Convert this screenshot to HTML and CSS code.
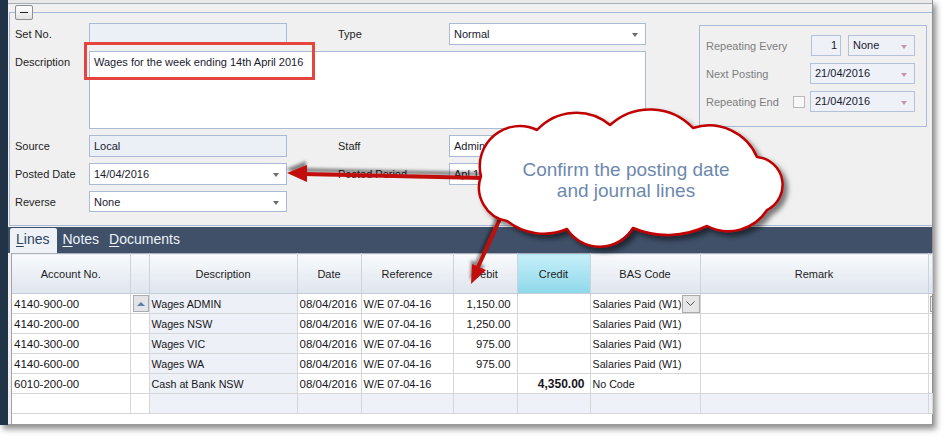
FILE: index.html
```html
<!DOCTYPE html>
<html>
<head>
<meta charset="utf-8">
<title>Journal</title>
<link rel="stylesheet" href="styles.css">
</head>
<body>
<div class="page">
  <div class="window">
    <div class="strip"></div>
    <div class="main">
      <div class="titlebar"></div>
      <div class="panel">
        <div class="group">
          <div class="collapse"><span class="dash"></span></div>
          <div class="form">
            <div class="lbl">Set No.</div>
            <div class="field ro"></div>
            <div></div>
            <div class="lbl">Type</div>
            <div class="field sel">Normal</div>

            <div class="lbl top">Description</div>
            <div class="field area">Wages for the week ending 14th April 2016</div>

            <div class="lbl">Source</div>
            <div class="field ro">Local</div>
            <div></div>
            <div class="lbl">Staff</div>
            <div class="field sel">Admin</div>

            <div class="lbl">Posted Date</div>
            <div class="field sel">14/04/2016</div>
            <div></div>
            <div class="lbl">Posted Period</div>
            <div class="field sel">Apl 16</div>

            <div class="lbl">Reverse</div>
            <div class="field sel">None</div>
          </div>
          <div class="repeat">
            <div class="rrow">
              <div class="rlbl">Repeating Every</div>
              <div class="rsp"></div>
              <div class="field dis num">1</div>
              <div class="field dis sel pink none">None</div>
            </div>
            <div class="rrow">
              <div class="rlbl">Next Posting</div>
              <div class="rsp2"></div>
              <div class="field dis sel pink date">21/04/2016</div>
            </div>
            <div class="rrow">
              <div class="rlbl">Repeating End</div>
              <div class="chk"></div>
              <div class="field dis sel pink date">21/04/2016</div>
            </div>
          </div>
        </div>
      </div>
      <div class="tabs">
        <div class="tab active"><u>L</u>ines</div>
        <div class="tab"><u>N</u>otes</div>
        <div class="tab"><u>D</u>ocuments</div>
      </div>
      <div class="gridwrap">
        <table class="grid">
          <colgroup>
            <col style="width:118px"><col style="width:19px"><col style="width:148px"><col style="width:64px"><col style="width:92px"><col style="width:64px"><col style="width:73px"><col style="width:110px"><col style="width:228px"><col style="width:4px">
          </colgroup>
          <thead>
            <tr>
              <th>Account No.</th><th></th><th>Description</th><th>Date</th><th>Reference</th><th>Debit</th><th class="hl">Credit</th><th>BAS Code</th><th>Remark</th><th></th>
            </tr>
          </thead>
          <tbody>
            <tr>
              <td class="dig">4140-900-00</td><td class="nar"><div class="upbtn"><span class="tri"></span></div></td><td class="desc">Wages ADMIN</td><td class="dig">08/04/2016</td><td>W/E 07-04-16</td><td class="num">1,150.00</td><td></td>
              <td class="txt bas"><div class="bascell"><span>Salaries Paid (W1)</span><div class="ddbtn"><svg width="9" height="6" viewBox="0 0 9 6"><polyline points="0.5,0.5 4.5,4.5 8.5,0.5" fill="none" stroke="#555" stroke-width="1"/></svg></div></div></td>
              <td></td><td class="edge"><div class="ibtn"></div></td>
            </tr>
            <tr>
              <td class="dig">4140-200-00</td><td></td><td class="desc">Wages NSW</td><td class="dig">08/04/2016</td><td>W/E 07-04-16</td><td class="num">1,250.00</td><td></td><td class="txt">Salaries Paid (W1)</td><td></td><td class="edge"></td>
            </tr>
            <tr>
              <td class="dig">4140-300-00</td><td></td><td class="desc">Wages VIC</td><td class="dig">08/04/2016</td><td>W/E 07-04-16</td><td class="num">975.00</td><td></td><td class="txt">Salaries Paid (W1)</td><td></td><td class="edge"></td>
            </tr>
            <tr>
              <td class="dig">4140-600-00</td><td></td><td class="desc">Wages WA</td><td class="dig">08/04/2016</td><td>W/E 07-04-16</td><td class="num">975.00</td><td></td><td class="txt">Salaries Paid (W1)</td><td></td><td class="edge"></td>
            </tr>
            <tr>
              <td class="dig">6010-200-00</td><td></td><td class="desc">Cash at Bank NSW</td><td class="dig">08/04/2016</td><td>W/E 07-04-16</td><td></td><td class="num bold">4,350.00</td><td class="txt">No Code</td><td></td><td class="edge"></td>
            </tr>
            <tr class="empty">
              <td></td><td></td><td></td><td></td><td></td><td></td><td></td><td></td><td></td><td></td>
            </tr>
          </tbody>
        </table>
      </div>
    </div>
  </div>

  <div class="highlight"></div>

  <svg class="overlay" width="949" height="440" viewBox="0 0 949 440">
    <defs>
      <filter id="ashadow" x="-20%" y="-50%" width="140%" height="200%">
        <feDropShadow dx="-1" dy="-4" stdDeviation="1.6" flood-color="#000" flood-opacity="0.45"/>
      </filter>
      <filter id="cshadow" x="-10%" y="-10%" width="130%" height="130%">
        <feDropShadow dx="4" dy="4" stdDeviation="2.5" flood-color="#000" flood-opacity="0.5"/>
      </filter>
    </defs>
    <g filter="url(#ashadow)" fill="#c20b0b">
      <line x1="525" y1="179" x2="303" y2="174" stroke="#c20b0b" stroke-width="4"/>
      <polygon points="287,173 307,165 307,182"/>
      <line x1="503" y1="212" x2="478" y2="267" stroke="#c20b0b" stroke-width="4"/>
      <polygon points="471,284 486,270 472,264"/>
    </g>
    <path filter="url(#cshadow)" fill="#fff" stroke="#c00000" stroke-width="2.5" stroke-linejoin="round"
      d="M537,130 A53 53 0 0 1 610,125 A59 59 0 0 1 693,128 A52 52 0 0 1 757,157 A28 28 0 0 1 767,210 A46 46 0 0 1 707,226 A90 90 0 0 1 633,228 A39 39 0 0 1 567,229 A60 60 0 0 1 507,221 A34 34 0 0 1 481,176 A40 40 0 0 1 537,130 Z"/>
  </svg>
  <div class="cloudtext">Confirm the posting date<br>and journal lines</div>
</div>
</body>
</html>
```

FILE: styles.css
```css
* { box-sizing: border-box; margin: 0; padding: 0; }
body { background: #fff; font-family: "Liberation Sans", Arial, sans-serif; font-size: 11px; color: #1b1b1b; }
.page { position: relative; width: 949px; height: 440px; overflow: hidden; }

.window { display: flex; width: 933px; height: 425px; background: #f0f0f0; box-shadow: 3px 4px 6px rgba(0,0,0,0.45); }
.strip { width: 8px; flex: none; background: #213447; }
.main { flex: 1; display: flex; flex-direction: column; border-right: 1px solid #8d9096; border-bottom: 1px solid #9a9a9a; background: #f0f0f0; min-width: 0; }
.titlebar { height: 4px; flex: none; background: #e8e8e8; border-bottom: 1px solid #a9adb4; }

.panel { flex: none; padding: 8px 0 1px 1px; background: #f0f0f0; }
.group { position: relative; height: 214px; display: flex; align-items: flex-start; padding: 10px 0 0 5px;
  border-top: 1px solid #a7b9d5; border-left: 1px solid #a7b9d5; border-bottom: 1px solid #a7b9d5; }
.collapse { position: absolute; left: 5px; top: -8px; width: 18px; height: 15px; border: 1px solid #8e8f90; border-radius: 2px;
  background: linear-gradient(#fdfdfd, #e4e4e4); display: flex; align-items: center; justify-content: center; }
.dash { display: block; width: 8px; height: 1px; background: #222; }

.form { flex: none; display: grid; grid-template-columns: 74px 198px 51px 111px 197px; grid-template-rows: 22px 78px 22px 22px 21px; row-gap: 6px; }
.lbl { line-height: 22px; color: #1e1e1e; white-space: nowrap; }
.lbl.top { line-height: 14px; padding-top: 4px; }
.field { position: relative; border: 1px solid #abbad3; background: #fff; padding: 0 4px; line-height: 20px; color: #1a1a30; white-space: nowrap; overflow: hidden; }
.field.ro { background: #ebf0f7; }
.field.area { grid-column: 2 / 6; line-height: 14px; padding-top: 3px; }
.field.sel::after { content: ""; position: absolute; right: 7px; top: 9px; border-top: 4px solid #6d6d6d; border-left: 3px solid transparent; border-right: 3px solid transparent; }
.field.pink::after { border-top-color: #c895ad; }

.repeat { flex: none; margin: 2px 0 0 53px; width: 228px; height: 102px; border: 1px solid #a7b9d5; padding: 9px 11px 0 6px; display: flex; flex-direction: column; gap: 7px; }
.rrow { display: flex; align-items: center; height: 21px; }
.rlbl { width: 87px; flex: none; color: #7d7d7d; white-space: nowrap; }
.rsp { width: 18px; flex: none; }
.rsp2 { width: 17px; flex: none; }
.chk { width: 12px; height: 12px; flex: none; margin-right: 5px; border: 1px solid #b8b8b8; background: #f8f8f8; }
.field.dis { height: 21px; line-height: 19px; background: #eef1f8; border-color: #b3c2d9; }
.field.num { width: 30px; text-align: right; padding-right: 3px; margin-right: 7px; }
.field.none { width: 67px; }
.field.date { width: 105px; }

.tabs { flex: none; height: 26px; background: #3f5068; display: flex; align-items: flex-end; padding-left: 2px; }
.tab { height: 25px; line-height: 22px; font-size: 14px; color: #eef3fa; padding: 0 5px; }
.tab.active { background: #eef1f6; color: #2c4466; padding: 0 8px 0 6px; border-radius: 2px 2px 0 0; }
.tab u { text-decoration-thickness: 1px; text-underline-offset: 2px; }

.gridwrap { flex: 1; margin-left: 3px; border-left: 1px solid #9ea3aa; background: #fff; }
.grid { border-collapse: collapse; table-layout: fixed; width: 920px; font-size: 11px; }
.grid th { height: 40px; font-weight: normal; color: #1d1d1d; background: linear-gradient(#f8fafc, #dfe5ee); border-right: 1px solid #cdd3dc; border-bottom: 1px solid #c4ccd7; border-top: 1px solid #a9b0ba; white-space: nowrap; }
.grid th.hl { background: linear-gradient(#c6eff8, #8ed8ea); }
.grid td { height: 20px; border: 1px solid #d6d6d6; border-top: none; padding: 0 2px; white-space: nowrap; overflow: hidden; color: #161620; }
.grid td:first-child { border-left: none; }
.grid td.dig { font-size: 11.5px; }
.grid td.desc { background: #edf0f6; font-size: 10.7px; }
.grid td.txt { font-size: 10.7px; }
.grid td.num { text-align: right; padding-right: 6px; font-size: 11.3px; }
.grid td.bold { font-weight: bold; font-size: 12px; padding-right: 5px; }
.grid tr.empty td { background: #eef1f7; }
.grid tr.empty td:first-child, .grid tr.empty td:nth-child(2) { background: #fff; }
.grid td.nar { padding: 0 0 0 2px; }
.upbtn { width: 16px; height: 17px; border: 1px solid #a8adb4; background: #e2e4e8; display: flex; align-items: center; justify-content: center; }
.tri { display: block; border-bottom: 4px solid #5f7fa8; border-left: 4px solid transparent; border-right: 4px solid transparent; }
.grid td.bas { padding-right: 0; }
.bascell { display: flex; align-items: center; justify-content: space-between; }
.bascell span { overflow: hidden; }
.ddbtn { width: 18px; height: 18px; flex: none; border: 1px solid #ababab; background: #e6e6e6; display: flex; align-items: center; justify-content: center; }
.grid td.edge { padding: 0; border-right: none; }
.ibtn { width: 5px; height: 16px; border: 1px solid #a0a0a0; border-right: none; background: #ececec; margin-left: 1px; }

.highlight { position: absolute; left: 84px; top: 42px; width: 231px; height: 38px; border: 3px solid #e4463f; }
.overlay { position: absolute; left: 0; top: 0; pointer-events: none; }
.cloudtext { position: absolute; left: 476px; top: 159px; width: 300px; text-align: center; font-size: 19px; line-height: 21px; color: #6d88ad; }
```
